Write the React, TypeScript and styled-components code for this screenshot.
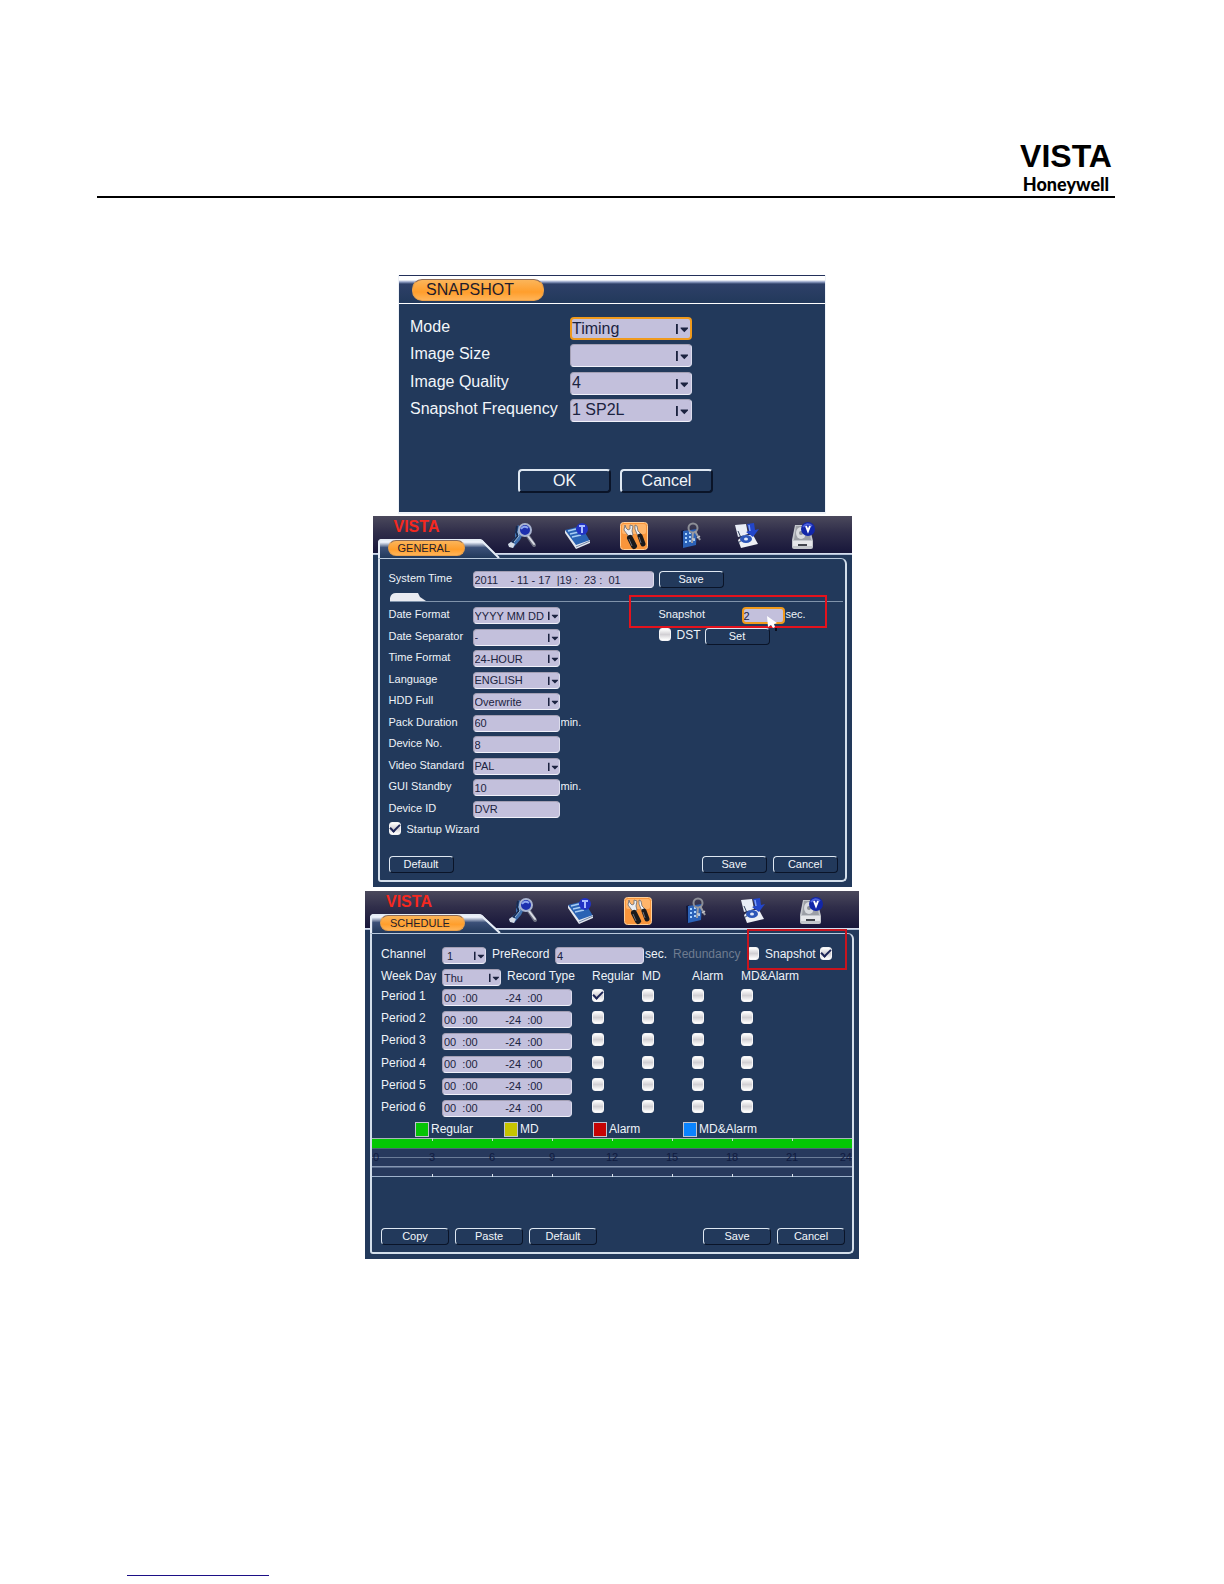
import React from "react";
import styled, { createGlobalStyle, css } from "styled-components";

const navy = "#22395b";
const field = "#c3c0dc";
const ink = "#1c2340";

const GlobalStyle = createGlobalStyle`
  * { box-sizing: border-box; }
  body { margin: 0; background: #fff; }
  body, button, input, select { font-family: "Liberation Sans", Arial, sans-serif; }
`;

/* ---------- page ---------- */

const Page = styled.div`
  min-height: 100vh;
  display: flex;
  flex-direction: column;
`;

const Masthead = styled.header`
  display: flex;
  justify-content: flex-end;
  margin: 140px 109px 0 97px;
  height: 58px;
  border-bottom: 2px solid #000;
`;

const Logo = styled.div`
  display: flex;
  flex-direction: column;
  align-items: center;
  width: 98px;
  color: #000;
`;

const LogoName = styled.span`
  font-size: 32px;
  font-weight: 700;
  line-height: 32px;
`;

const LogoMaker = styled.span`
  font-family: Lato, "Liberation Sans", sans-serif;
  font-size: 18px;
  font-weight: 900;
  line-height: 24px;
`;

const Figures = styled.main`
  display: flex;
  flex-direction: column;
  align-items: center;
  margin-top: 77px;
`;

const FootRule = styled.footer`
  width: 142px;
  margin: auto 0 8px 127px;
  border-top: 1px solid #1c0f86;
`;

/* ---------- controls ---------- */

const Button = styled.button<{ $large?: boolean }>`
  width: ${(p) => (p.$large ? 93 : 65)}px;
  height: ${(p) => (p.$large ? 24 : 17)}px;
  padding: 0;
  border: solid;
  border-width: ${(p) => (p.$large ? "2px" : "1px")};
  border-color: #dfe8f2 #0a1428 #0a1428 #dfe8f2;
  border-radius: 4px;
  background: ${navy};
  color: #f2f6fa;
  font-size: ${(p) => (p.$large ? 16 : 11)}px;
  line-height: 1;
`;

const fieldLook = css<{ $focus?: boolean; $large?: boolean }>`
  display: block;
  width: 100%;
  height: 100%;
  min-height: 0;
  margin: 0;
  padding: 0 1px;
  border: 1px solid;
  border-color: #a39fb4 #dcdcec #f1f1fa #a39fb4;
  border-radius: 4px;
  outline: none;
  background: ${field};
  color: ${ink};
  font-size: ${(p) => (p.$large ? 16 : 11)}px;
  ${(p) => p.$focus && css`border: 2px solid #f09a1c; padding: 0;`}
`;

const Input = styled.input`${fieldLook}`;

const Select = styled.select`
  ${fieldLook}
  appearance: none;
  line-height: ${(p) => (p.$large ? 18 : 12)}px;
`;

const SelectBox = styled.span<{ $large?: boolean }>`
  position: relative;
  display: block;
  width: 100%;
  height: ${(p) => (p.$large ? 23 : 17)}px;
`;

const Arrow = styled.svg<{ $large?: boolean }>`
  position: absolute;
  top: 0;
  right: ${(p) => (p.$large ? 4 : 2)}px;
  width: ${(p) => (p.$large ? 12 : 10)}px;
  height: 100%;
  pointer-events: none;
`;

type DropProps = { id: string; value: string; large?: boolean; focus?: boolean };

function Drop({ id, value, large, focus }: DropProps) {
  return (
    <SelectBox $large={large}>
      <Select id={id} $large={large} $focus={focus} defaultValue={value}>
        <option value={value}>{value}</option>
      </Select>
      <Arrow $large={large} viewBox="0 0 13 12" aria-hidden="true">
        <path d="M0 1h2v11H0zM5 5h8v1l-4 4-4-4z" fill={ink} />
      </Arrow>
    </SelectBox>
  );
}

const Check = styled.input.attrs({ type: "checkbox" })`
  appearance: none;
  display: grid;
  place-content: center;
  flex: none;
  width: 12px;
  height: 13px;
  margin: 0;
  border: 1px solid #f4f4f6;
  border-radius: 3px;
  background: linear-gradient(#fff, #d2d0d4 50%, #fff);
  &:checked::after {
    content: "";
    width: 8px;
    height: 4px;
    margin-bottom: 3px;
    border: solid #1d2556;
    border-width: 0 0 2px 2px;
    transform: rotate(-45deg);
  }
`;

const Label = styled.label<{ $size?: number; $dim?: boolean }>`
  color: ${(p) => (p.$dim ? "#6f7c90" : "#eef3f8")};
  font-size: ${(p) => p.$size ?? 11}px;
  line-height: 14px;
  white-space: nowrap;
`;

const Pill = styled.h2<{ $large?: boolean }>`
  display: flex;
  align-items: center;
  margin: 0;
  width: fit-content;
  height: ${(p) => (p.$large ? 22 : 16)}px;
  padding: ${(p) => (p.$large ? "0 29px 0 13px" : "0 14px 0 9px")};
  border: 1px solid #e9a04a;
  border-top-color: #8d6a55;
  border-radius: 10px;
  background: linear-gradient(#fbb55a, #ff9e2c 60%, #ffb458);
  color: #1f1d2c;
  font-size: ${(p) => (p.$large ? 16 : 11)}px;
  font-weight: 400;
  line-height: 1;
`;

const Highlight = styled.span<{ $box: string; $color: string }>`
  position: absolute;
  inset: ${(p) => p.$box};
  border: 2px solid ${(p) => p.$color};
  pointer-events: none;
`;

/* ---------- snapshot dialog ---------- */

const Dialog = styled.section`
  width: 428px;
  max-width: 100%;
  border: solid #eef2f8;
  border-width: 0 1px 2px;
  background: ${navy};
`;

const DialogHead = styled.div`
  height: 29px;
  padding: 3px 13px 0;
  border-top: 1px solid #23305a;
  border-bottom: 1px solid #fff;
  background: linear-gradient(#fff 4px, #8f9ec4 6px, #2e4068 8px, ${navy} 100%);
`;

const DialogForm = styled.div`
  display: grid;
  grid-template-columns: 160px 122px;
  grid-auto-rows: 23px;
  align-content: space-between;
  height: 105px;
  margin: 13px 11px 47px;
`;

const DialogLabel = styled.label`
  color: #f2f6fa;
  font-size: 16px;
  line-height: 19px;
  white-space: nowrap;
`;

const DialogButtons = styled.div`
  display: flex;
  justify-content: center;
  gap: 9px;
  padding: 0 0 19px 7px;
`;

const dialogRows = [
  { id: "mode", label: "Mode", value: "Timing", focus: true },
  { id: "size", label: "Image Size", value: "" },
  { id: "quality", label: "Image Quality", value: "4" },
  { id: "freq", label: "Snapshot Frequency", value: "1 SP2L" },
];

function SnapshotDialog() {
  return (
    <Dialog>
      <DialogHead>
        <Pill $large>SNAPSHOT</Pill>
      </DialogHead>
      <DialogForm>
        {dialogRows.map((r) => (
          <React.Fragment key={r.id}>
            <DialogLabel htmlFor={r.id}>{r.label}</DialogLabel>
            <Drop id={r.id} value={r.value} focus={r.focus} large />
          </React.Fragment>
        ))}
      </DialogForm>
      <DialogButtons>
        <Button $large>OK</Button>
        <Button $large>Cancel</Button>
      </DialogButtons>
    </Dialog>
  );
}

/* ---------- toolbar icons ---------- */

const Icon = styled.svg`
  display: block;
  width: 28px;
  height: 28px;
`;

function SearchIcon() {
  return (
    <Icon viewBox="0 0 28 28" aria-hidden="true">
      <path d="M10 3l4 3-2 4 2 4-2 4-7 8-5-3 7-7V9z" fill="#3f6fae" />
      <path d="M9 4l-1 6 2 4-6 7" fill="none" stroke="#16294f" strokeWidth="2" />
      <path d="M12 5l-2 5 1 4-5 6" fill="none" stroke="#9fc0e2" strokeWidth="1" />
      <path d="M0 22l3-2 4 2-2 4-4-1z" fill="#d5dce6" />
      <path d="M20 14l6 9" stroke="#6c6f80" strokeWidth="4" strokeLinecap="round" />
      <path d="M20 14l6 8" stroke="#d9dbe4" strokeWidth="2" strokeLinecap="round" />
      <circle cx="17" cy="8" r="6" fill="#1d2fae" stroke="#a9b4d0" strokeWidth="2" />
      <path d="M13 7q3-4 7-1" fill="none" stroke="#8ea6ef" strokeWidth="2" />
    </Icon>
  );
}

function BookIcon() {
  return (
    <Icon viewBox="0 0 28 28" aria-hidden="true">
      <path d="M1 8l16-4 9 15-14 5z" fill="#2a63b4" />
      <path d="M12 23l14-5v3l-14 6L1 11V8z" fill="#e3e8f0" />
      <path d="M12 25l14-6" stroke="#7588a8" strokeWidth="1" />
      <path d="M4 9l8-2M6 12l9-2M8 15l9-2" stroke="#a9cdf4" strokeWidth="1.5" />
      <circle cx="18" cy="7" r="6" fill="#2233c4" />
      <path d="M15 4h6M18 4v7" stroke="#a9bcff" strokeWidth="2" />
    </Icon>
  );
}

function ToolsIcon() {
  return (
    <Icon viewBox="0 0 28 28" aria-hidden="true">
      <rect x="0.5" y="0.5" width="27" height="27" rx="3" fill="#f9953b" stroke="#ffd09a" />
      <rect x="2" y="2" width="24" height="10" rx="2" fill="#ffb56b" />
      <path d="M5 3l-1 5 3 4 2 3 4-2-1-4 1-5-3-1 0 4-2 1-2-2z" fill="#eceef2" stroke="#6b6b70" strokeWidth=".8" />
      <path d="M15 3l2 1 1 5 3 3-2 3-2-3-2-5z" fill="#f2f2f5" stroke="#6b6b70" strokeWidth=".8" />
      <path d="M10 16l4 8" stroke="#19191c" strokeWidth="6" strokeLinecap="round" />
      <path d="M20 14l3 8" stroke="#19191c" strokeWidth="5" strokeLinecap="round" />
      <path d="M9 17l3 7M19 15l2 6" stroke="#6e6e74" strokeWidth="1" />
    </Icon>
  );
}

function KeysIcon() {
  return (
    <Icon viewBox="0 0 28 28" aria-hidden="true">
      <path d="M4 9l3-1v18l-2-1z" fill="#10163a" />
      <path d="M6 9l14-2-1 16-13 3z" fill="#2b62b8" />
      <path d="M8 12l2 0M12 11l2 0M8 16l2 0M12 15l2 0M8 20l2 0M12 19l2 0M16 18l2 0" stroke="#a7d2ff" strokeWidth="2" />
      <circle cx="16" cy="6" r="4.500" fill="none" stroke="#8c8e96" strokeWidth="2" />
      <path d="M16 10l-1 11M18 9l5 9" stroke="#9b9ca2" strokeWidth="2" />
      <path d="M15 17h3M20 16l3-2" stroke="#c6c6ca" strokeWidth="1.500" />
    </Icon>
  );
}

function ExportIcon() {
  return (
    <Icon viewBox="0 0 28 28" aria-hidden="true">
      <path d="M2 3l11-1 2 10-10 3z" fill="#e9edf6" />
      <path d="M5 18l3 8 17-4-5-9-9 0z" fill="#eef0f5" />
      <path d="M5 9l4 9-4 3" fill="none" stroke="#31415f" strokeWidth="1" />
      <ellipse cx="13" cy="17" rx="6" ry="4" fill="#2d56b8" />
      <ellipse cx="13" cy="17" rx="2" ry="1.500" fill="#dfe7f8" />
      <path d="M14 2l7-1 1 7 4-1-6 8-7-5 3-1z" fill="#2346c9" />
      <path d="M16 3l1 6" stroke="#7fa0f6" strokeWidth="1.500" />
    </Icon>
  );
}

function DiskIcon() {
  return (
    <Icon viewBox="0 0 28 28" aria-hidden="true">
      <path d="M6 3h14l4 16v6q0 2-2 2H5q-2 0-2-2v-7z" fill="#c4c7cc" />
      <path d="M7 4h12l3 14H5z" fill="#9c9fa6" />
      <ellipse cx="12" cy="11" rx="5" ry="6" fill="#d9dbdf" />
      <circle cx="12" cy="11" r="2" fill="#8b8e95" />
      <path d="M4 19h19v5H4z" fill="#e6e7ea" />
      <path d="M9 23h9" stroke="#41444c" strokeWidth="2" />
      <circle cx="19" cy="7" r="7" fill="#1226a8" />
      <path d="M14 5q4-5 9-1" fill="none" stroke="#4e63dc" strokeWidth="2" />
      <path d="M17 4l2 5 2-5" fill="none" stroke="#fff" strokeWidth="2" />
    </Icon>
  );
}

/* ---------- settings window ---------- */

const Window = styled.section<{ $width: number; $gap: number }>`
  width: ${(p) => p.$width}px;
  max-width: 100%;
  margin-top: ${(p) => p.$gap}px;
  background: ${navy};
`;

const TopBar = styled.header`
  display: flex;
  height: 42px;
  background: linear-gradient(
    #4b495c, #302e4a 16px, #17163a 37px, #e8edf8 37px, #9fb0cc 39px, ${navy} 39px
  );
`;

const TopLeft = styled.div<{ $width: number }>`
  width: ${(p) => p.$width}px;
  padding-left: 5px;
`;

const Brand = styled.div`
  height: 23px;
  padding: 3px 0 0 16px;
  color: #f5281f;
  font-size: 16px;
  font-weight: 700;
  line-height: 16px;
`;

const Tab = styled.div<{ $width: number }>`
  position: relative;
  width: ${(p) => p.$width}px;
  height: 19px;
  padding: 1px 10px;
  > h2 { position: relative; }
`;

const TabShape = styled.svg`
  position: absolute;
  inset: 0;
  width: 100%;
  height: 100%;
`;

const IconRow = styled.nav`
  display: flex;
  flex: 1;
  justify-content: space-between;
  padding-top: 6px;
  margin-right: 34px;
`;

const Frame = styled.div`
  margin: 0 5px;
  border: 2px solid #d3deea;
  border-top: 1px solid #b9c9dc;
  border-radius: 0 6px 5px 3px;
`;

const WindowBase = styled.div`
  height: 5px;
`;

type ShellProps = {
  id: string;
  title: string;
  width: number;
  gap: number;
  tabWidth: number;
  children: React.ReactNode;
};

function Shell({ id, title, width, gap, tabWidth, children }: ShellProps) {
  return (
    <Window $width={width} $gap={gap}>
      <TopBar>
        <TopLeft $width={tabWidth + 13}>
          <Brand>VISTA</Brand>
          <Tab $width={tabWidth}>
            <TabShape viewBox="0 0 122 19" preserveAspectRatio="none" aria-hidden="true">
              <defs>
                <linearGradient id={id} x1="0" y1="0" x2="0" y2="1">
                  <stop offset="0" stopColor="#fff" />
                  <stop offset=".18" stopColor="#e8edf8" />
                  <stop offset=".45" stopColor="#3b5078" />
                  <stop offset="1" stopColor={navy} />
                </linearGradient>
              </defs>
              <path d="M0 19V4q0-4 4-4h97q3 0 6 4l15 15z" fill={`url(#${id})`} />
              <path d="M1 19V4q0-3 3-3h97q3 0 5 3l15 15" fill="none" stroke="#e6edf6" strokeWidth="2" />
            </TabShape>
            <Pill>{title}</Pill>
          </Tab>
        </TopLeft>
        <IconRow>
          <SearchIcon />
          <BookIcon />
          <ToolsIcon />
          <KeysIcon />
          <ExportIcon />
          <DiskIcon />
        </IconRow>
      </TopBar>
      <Frame>{children}</Frame>
      <WindowBase />
    </Window>
  );
}

const ButtonRow = styled.div<{ $top: number; $each?: number }>`
  display: flex;
  gap: 6px;
  margin-top: ${(p) => p.$top}px;
  padding: 0 7px 7px 9px;
  > button { width: ${(p) => p.$each ?? 65}px; }
`;

const Spacer = styled.span`
  flex: 1;
`;

/* ---------- general ---------- */

const TimeRow = styled.div`
  display: grid;
  grid-template-columns: 84px 181px 70px;
  height: 17px;
  margin: 12px 0 0 9px;
  > button { margin-left: 5px; }
`;

const Divider = styled.div`
  height: 14px;
  margin: 0 2px 0 10px;
  padding-top: 5px;
  border-bottom: 1px solid #8093ab;
`;

const DividerTab = styled.svg`
  display: block;
  width: 36px;
  height: 8px;
`;

const Columns = styled.div`
  display: grid;
  grid-template-columns: 270px 1fr;
  padding: 5px 0 0 9px;
`;

const FieldGrid = styled.div`
  display: grid;
  grid-template-columns: 84px 87px 1fr;
  grid-auto-rows: 17px;
  align-content: space-between;
  height: 232px;
`;

const Suffix = styled.span<{ $size?: number }>`
  padding-left: 1px;
  color: #eef3f8;
  font-size: ${(p) => p.$size ?? 11}px;
  line-height: 14px;
`;

const WizardRow = styled.div`
  display: flex;
  grid-column: 1 / -1;
  gap: 6px;
`;

const SideRows = styled.div`
  display: grid;
  grid-auto-rows: 17px;
  row-gap: 4px;
  align-content: start;
`;

const SnapshotRow = styled.div`
  position: relative;
  display: grid;
  grid-template-columns: 83px 43px 1fr;
  width: 152px;
`;

const DstRow = styled.div`
  display: grid;
  grid-template-columns: 18px 28px 66px;
  align-items: start;
`;

const Cursor = styled.svg`
  position: absolute;
  left: 108px;
  top: 9px;
  width: 12px;
  height: 16px;
`;

type GeneralRow = { id: string; label: string; value: string; kind: "select" | "text"; unit?: string };

const generalRows: GeneralRow[] = [
  { id: "dateFormat", label: "Date Format", value: "YYYY MM DD", kind: "select" },
  { id: "dateSep", label: "Date Separator", value: "-", kind: "select" },
  { id: "timeFormat", label: "Time Format", value: "24-HOUR", kind: "select" },
  { id: "language", label: "Language", value: "ENGLISH", kind: "select" },
  { id: "hdd", label: "HDD Full", value: "Overwrite", kind: "select" },
  { id: "pack", label: "Pack Duration", value: "60", kind: "text", unit: "min." },
  { id: "devNo", label: "Device No.", value: "8", kind: "text" },
  { id: "video", label: "Video Standard", value: "PAL", kind: "select" },
  { id: "standby", label: "GUI Standby", value: "10", kind: "text", unit: "min." },
  { id: "devId", label: "Device ID", value: "DVR", kind: "text" },
];

const nb = (count: number) => "\u00a0".repeat(count);

const systemTime = `2011${nb(4)}- 11 - 17${nb(2)}|19 :${nb(2)}23 :${nb(2)}01`;

function GeneralWindow() {
  return (
    <Shell id="tabGeneral" title="GENERAL" width={479} gap={2} tabWidth={122}>
      <TimeRow>
        <Label htmlFor="sysTime">System Time</Label>
        <Input id="sysTime" defaultValue={systemTime} />
        <Button>Save</Button>
      </TimeRow>
      <Divider>
        <DividerTab viewBox="0 0 36 8" aria-hidden="true">
          <path d="M0 8V5q1-5 6-5h22l2 4 6 4z" fill="#e9ebf1" />
        </DividerTab>
      </Divider>
      <Columns>
        <FieldGrid>
          {generalRows.map((r) => (
            <React.Fragment key={r.id}>
              <Label htmlFor={r.id}>{r.label}</Label>
              {r.kind === "select" ? (
                <Drop id={r.id} value={r.value} />
              ) : (
                <Input id={r.id} defaultValue={r.value} />
              )}
              <Suffix>{r.unit}</Suffix>
            </React.Fragment>
          ))}
          <WizardRow>
            <Check id="wizard" defaultChecked />
            <Label htmlFor="wizard">Startup Wizard</Label>
          </WizardRow>
        </FieldGrid>
        <SideRows>
          <SnapshotRow>
            <Label htmlFor="snapSec">Snapshot</Label>
            <Input id="snapSec" $focus defaultValue="2" />
            <Suffix>sec.</Suffix>
            <Highlight $box="-12px -16px -4px -30px" $color="#e4121c" />
            <Cursor viewBox="0 0 12 16" aria-hidden="true">
              <path d="M0 0l1 11 3-2 2 3 2-1-1-3 3-1z" fill="#fff" />
              <path d="M8 13h2M9 12v3" stroke="#0b1020" strokeWidth="2" />
            </Cursor>
          </SnapshotRow>
          <DstRow>
            <Check id="dst" />
            <Label htmlFor="dst" $size={12}>DST</Label>
            <Button>Set</Button>
          </DstRow>
        </SideRows>
      </Columns>
      <ButtonRow $top={17}>
        <Button>Default</Button>
        <Spacer />
        <Button>Save</Button>
        <Button>Cancel</Button>
      </ButtonRow>
    </Shell>
  );
}

/* ---------- schedule ---------- */

const ChannelRow = styled.div`
  display: grid;
  grid-template-columns: 61px 44px 6px 63px 89px 29px 74px 18px 1fr;
  height: 17px;
  margin: 13px 0 0 9px;
`;

const SnapshotFlag = styled.div`
  position: relative;
  display: flex;
  justify-content: space-between;
  width: 67px;
`;

const typeColumns = css`
  display: grid;
  grid-template-columns: 61px 130px 20px 50px 50px 49px 1fr;
  padding-left: 9px;
`;

const WeekRow = styled.div`
  ${typeColumns}
  height: 17px;
  margin: 5px 0 3px;
`;

const WeekPick = styled.div`
  display: grid;
  grid-template-columns: 59px 1fr;
  column-gap: 6px;
`;

const Periods = styled.div`
  ${typeColumns}
  grid-auto-rows: 17px;
  align-content: space-between;
  height: 128px;
`;

const Legend = styled.ul`
  display: grid;
  grid-template-columns: 89px 89px 90px 1fr;
  margin: 5px 0 2px 43px;
  padding: 0;
  list-style: none;
`;

const LegendItem = styled.li<{ $color: string }>`
  display: flex;
  align-items: center;
  gap: 2px;
  height: 14px;
  color: #eef3f8;
  font-size: 12px;
  &::before {
    content: "";
    width: 12px;
    height: 13px;
    border: 1px solid #c0c3cf;
    background: ${(p) => p.$color};
  }
`;

const Timeline = styled.svg`
  display: block;
  width: 100%;
  height: 40px;
`;

const types = ["Regular", "MD", "Alarm", "MD&Alarm"];
const periods = [1, 2, 3, 4, 5, 6];
const hours = [0, 3, 6, 9, 12, 15, 18, 21, 24];
const periodTime = `00${nb(2)}:00${nb(9)}-24${nb(2)}:00`;

const legend = [
  { name: "Regular", color: "#06c406" },
  { name: "MD", color: "#c6c400" },
  { name: "Alarm", color: "#c60404" },
  { name: "MD&Alarm", color: "#0a84ff" },
];

function DayTimeline() {
  return (
    <Timeline role="img" aria-label="Recording hours">
      <rect width="100%" height="39" fill="#27395d" />
      <rect width="100%" height="1" fill="#a9b7b9" />
      <rect y="1" width="100%" height="9" fill="#04c804" />
      <rect y="10" width="100%" height="1" fill="#4b6a72" />
      <rect y="19" width="100%" height="1" fill="#6b7c98" />
      {hours.map((h) => (
        <text
          key={h}
          x={h === 0 ? "1" : `${(h / 24) * 100}%`}
          y="23"
          textAnchor={h === 0 ? "start" : h === 24 ? "end" : "middle"}
          fontSize="11"
          fill="#101b40"
        >
          {h}
        </text>
      ))}
      <rect y="28" width="100%" height="1" fill="#8797b2" />
      <rect y="29" width="100%" height="1" fill="#56698a" />
      <rect y="38" width="100%" height="1" fill="#9fb2cc" />
      {hours.slice(1, -1).map((h) => (
        <React.Fragment key={h}>
          <rect x={`${(h / 24) * 100}%`} y="0" width="1" height="3" fill="#c9d6d2" />
          <rect x={`${(h / 24) * 100}%`} y="36" width="1" height="3" fill="#dbe4ee" />
        </React.Fragment>
      ))}
    </Timeline>
  );
}

function ScheduleWindow() {
  return (
    <Shell id="tabSchedule" title="SCHEDULE" width={494} gap={4} tabWidth={131}>
      <ChannelRow>
        <Label htmlFor="channel" $size={12}>Channel</Label>
        <Drop id="channel" value={`${nb(1)}1`} />
        <span />
        <Label htmlFor="preRecord" $size={12}>PreRecord</Label>
        <Input id="preRecord" defaultValue="4" />
        <Suffix $size={12}>sec.</Suffix>
        <Label htmlFor="redundancy" $size={12} $dim>Redundancy</Label>
        <Check id="redundancy" />
        <SnapshotFlag>
          <Label htmlFor="snapFlag" $size={12}>Snapshot</Label>
          <Check id="snapFlag" defaultChecked />
          <Highlight $box="-18px -15px -6px -18px" $color="#c9141e" />
        </SnapshotFlag>
      </ChannelRow>
      <WeekRow>
        <Label htmlFor="weekDay" $size={12}>Week Day</Label>
        <WeekPick>
          <Drop id="weekDay" value="Thu" />
          <Label as="span" $size={12}>Record Type</Label>
        </WeekPick>
        <span />
        {types.map((t) => (
          <Label as="span" key={t} $size={12}>{t}</Label>
        ))}
      </WeekRow>
      <Periods>
        {periods.map((n) => (
          <React.Fragment key={n}>
            <Label htmlFor={`period${n}`} $size={12}>{`Period ${n}`}</Label>
            <Input id={`period${n}`} defaultValue={periodTime} />
            <span />
            {types.map((t, i) => (
              <Check
                key={t}
                aria-label={`Period ${n} ${t}`}
                defaultChecked={n === 1 && i === 0}
              />
            ))}
          </React.Fragment>
        ))}
      </Periods>
      <Legend>
        {legend.map((l) => (
          <LegendItem key={l.name} $color={l.color}>{l.name}</LegendItem>
        ))}
      </Legend>
      <DayTimeline />
      <ButtonRow $top={50} $each={68}>
        <Button>Copy</Button>
        <Button>Paste</Button>
        <Button>Default</Button>
        <Spacer />
        <Button>Save</Button>
        <Button>Cancel</Button>
      </ButtonRow>
    </Shell>
  );
}

export default function App() {
  return (
    <Page>
      <GlobalStyle />
      <Masthead>
        <Logo>
          <LogoName>VISTA</LogoName>
          <LogoMaker>Honeywell</LogoMaker>
        </Logo>
      </Masthead>
      <Figures>
        <SnapshotDialog />
        <GeneralWindow />
        <ScheduleWindow />
      </Figures>
      <FootRule />
    </Page>
  );
}
